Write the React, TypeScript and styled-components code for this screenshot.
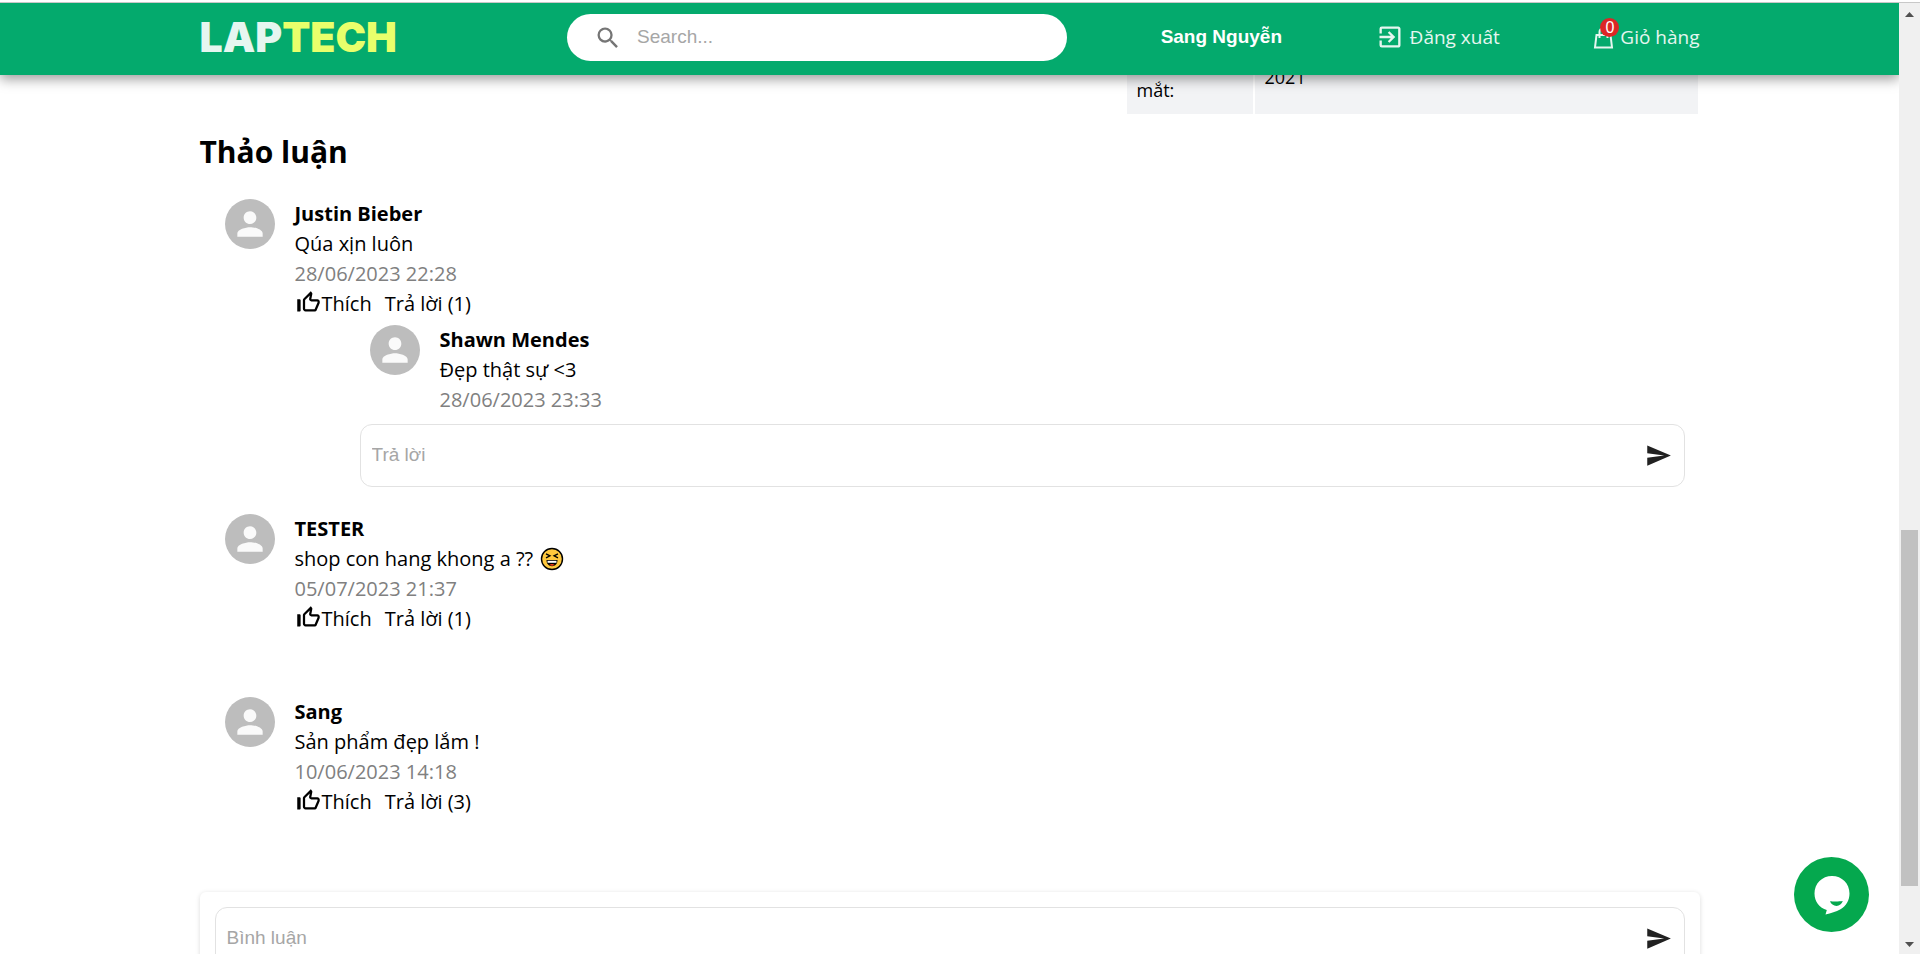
import React from 'react';
import styled, { createGlobalStyle } from 'styled-components';
import { MdExitToApp, MdPerson, MdSearch, MdSend, MdThumbUpOffAlt } from 'react-icons/md';

const GlobalStyle = createGlobalStyle`
  *, *::before, *::after { box-sizing: border-box; }
  body {
    margin: 0;
    overflow: hidden;
    background: #fff;
    color: #000;
    font-family: 'Open Sans', 'Noto Sans', sans-serif;
    font-size: 20px;
    line-height: 30px;
  }
  button { border: 0; padding: 0; background: none; color: inherit; font: inherit; cursor: pointer; }
  a { color: inherit; text-decoration: none; }
  input { font-family: 'Liberation Sans', Arial, sans-serif; }
  svg { display: block; flex: none; }
`;

const Shell = styled.div`
  height: calc(100vh - 2px);
  display: grid;
  grid-template-columns: minmax(0, 1fr) 21px;
  border-top: 1px solid #c8c8c8;
  margin-top: 2px;
  overflow: hidden;
`;

const Page = styled.div`
  min-height: 0;
  overflow: hidden;
`;

const Container = styled.div`
  width: 100%;
  max-width: 1500px;
  margin: 0 auto;
`;

const Header = styled.header`
  position: relative;
  z-index: 2;
  background: #04aa6d;
  box-shadow: 0 4px 12px rgba(0, 0, 0, 0.4);
`;

const Bar = styled(Container)`
  display: flex;
  align-items: center;
  justify-content: space-between;
  height: 72px;
  padding-bottom: 3px;
`;

const Logo = styled.a`
  flex: 0 0 274px;
  padding-bottom: 2px;
  color: #e6f6f0;
  font: 900 41px/48px Inter, sans-serif;
`;

const LogoAccent = styled.span`
  color: #e8ff6b;
`;

const SearchBox = styled.label`
  flex: 0 1 500px;
  display: flex;
  align-items: center;
  gap: 15px;
  height: 47px;
  padding: 0 27px;
  border-radius: 24px;
  background: #fff;
  color: #757575;
`;

const TextInput = styled.input`
  flex: 1;
  min-width: 0;
  padding: 0 0 2px;
  border: 0;
  outline: 0;
  background: none;
  font-size: 19px;
  &::placeholder { color: #a6a6a6; opacity: 1; }
`;

const NavLink = styled.a`
  display: flex;
  align-items: center;
  gap: 6px;
  padding-bottom: 2px;
  color: #e6f6f0;
  font-size: 19px;
`;

const UserLink = styled(NavLink)`
  color: #fff;
  font: 700 19px/30px 'Liberation Sans', Arial, sans-serif;
`;

const CartIcon = styled.span`
  position: relative;
`;

const Badge = styled.span`
  position: absolute;
  top: -7px;
  right: -5px;
  width: 19px;
  height: 19px;
  border-radius: 50%;
  background: #dc2626;
  color: #fff;
  font: 16px/19px 'Liberation Sans', Arial, sans-serif;
  text-align: center;
`;

const Specs = styled.table`
  width: 575px;
  margin: -35px 0 0 auto;
  border-spacing: 2px 0;
  font-size: 18px;
  line-height: 27px;
  th, td { padding: 10px; background: #f2f3f5; font-weight: 400; text-align: left; }
  th { width: 126px; }
`;

const Title = styled.h2`
  margin: 15px 0 25px;
  font-size: 30px;
  font-weight: 700;
  line-height: 45px;
`;

const CommentList = styled.section`
  padding: 0 15px 0 25px;
`;

const Thread = styled.article`
  min-height: 183px;
`;

const Post = styled.div`
  display: flex;
  align-items: flex-start;
  gap: 20px;
`;

const Avatar = styled.span`
  flex: none;
  display: grid;
  place-items: center;
  width: 50px;
  height: 50px;
  border-radius: 50%;
  background: #bdbdbd;
  color: #fafafa;
`;

const Author = styled.h3`
  margin: 0;
  font-size: 20px;
  font-weight: 700;
  line-height: 30px;
`;

const Text = styled.p`
  display: flex;
  align-items: center;
  gap: 7px;
  margin: 0;
`;

const Time = styled.time`
  display: block;
  color: #808080;
`;

const Actions = styled.div`
  display: flex;
  gap: 13px;
`;

const Action = styled.button`
  display: flex;
  align-items: flex-start;
`;

const Replies = styled.div`
  padding: 6px 0 27px 135px;
`;

const Reply = styled(Post)`
  padding: 0 0 9px 10px;
`;

const Field = styled.form`
  display: flex;
  align-items: center;
  height: 63px;
  padding: 0 12px 0 11px;
  border: 1px solid #e2e2e2;
  border-radius: 12px;
  background: #fff;
`;

const SendButton = styled.button`
  color: #212121;
`;

const Composer = styled.section`
  margin-top: 12px;
  padding: 15px;
  border-radius: 6px;
  box-shadow: 0 1px 5px rgba(0, 0, 0, 0.14);
`;

const ChatButton = styled.button`
  position: fixed;
  z-index: 3;
  right: 51px;
  bottom: 22px;
`;

const Scrollbar = styled.div`
  display: flex;
  flex-direction: column;
  align-items: center;
  justify-content: space-between;
  padding: 9px 0 7px;
  background: #f0f0f0;
`;

const Track = styled.div`
  flex: 1;
  display: grid;
  grid-template-rows: 513fr 356fr 56fr;
  width: 17px;
`;

const Thumb = styled.div`
  grid-row: 2;
  background: #c1c1c1;
`;

const Arrow = ({ down = false }: { down?: boolean }) => (
  <svg width="9" height="5" viewBox="0 0 9 5" fill="#505050">
    <path d={down ? 'M0 0h9L4.5 5z' : 'M0 5h9L4.5 0z'} />
  </svg>
);

const Laugh = () => (
  <svg width="24" height="24" viewBox="0 0 24 24" role="img" aria-label="laughing">
    <circle cx="12" cy="12" r="10.5" fill="#ffc83d" stroke="#000" strokeWidth="1.4" />
    <path d="M6 6.8l4 2-4 2M18 6.8l-4 2 4 2" fill="none" stroke="#000" strokeWidth="1.3" />
    <path d="M6.5 13h11c0 4-2.3 6.2-5.5 6.2S6.5 17 6.5 13z" fill="#000" />
    <path d="M7.5 13.8h9v2h-9z" fill="#fff" />
    <path d="M9.5 18c1-1.2 4-1.2 5 0-1.4.9-3.6.9-5 0z" fill="#f03a17" />
  </svg>
);

const Bag = () => (
  <svg width="21" height="24" viewBox="0 0 21 24" fill="none" stroke="currentColor" strokeWidth="2">
    <path d="M3.5 10h14l1.5 12.5H2zM6.5 13V7a4 4 0 0 1 8 0v6" />
  </svg>
);

const PersonAvatar = () => (
  <Avatar>
    <MdPerson size={38} />
  </Avatar>
);

type Message = { author: string; text: string; time: string; laugh?: boolean };
type Comment = Message & { count: number; replies?: Message[] };

const comments: Comment[] = [
  {
    author: 'Justin Bieber',
    text: 'Qúa xịn luôn',
    time: '28/06/2023 22:28',
    count: 1,
    replies: [{ author: 'Shawn Mendes', text: 'Đẹp thật sự <3', time: '28/06/2023 23:33' }],
  },
  { author: 'TESTER', text: 'shop con hang khong a ??', time: '05/07/2023 21:37', laugh: true, count: 1 },
  { author: 'Sang', text: 'Sản phẩm đẹp lắm !', time: '10/06/2023 14:18', count: 3 },
];

const MessageBody = ({ author, text, time, laugh }: Message) => (
  <>
    <Author>{author}</Author>
    <Text>
      {text}
      {laugh && <Laugh />}
    </Text>
    <Time>{time}</Time>
  </>
);

const MessageField = ({ label }: { label: string }) => (
  <Field onSubmit={(e) => e.preventDefault()}>
    <TextInput type="text" placeholder={label} aria-label={label} />
    <SendButton type="submit" aria-label="Gửi">
      <MdSend size={27} />
    </SendButton>
  </Field>
);

export default function App() {
  return (
    <>
      <GlobalStyle />
      <Shell>
        <Page>
          <Header>
            <Bar>
              <Logo href="#">
                LAP<LogoAccent>TECH</LogoAccent>
              </Logo>
              <SearchBox>
                <MdSearch size={28} />
                <TextInput type="search" placeholder="Search..." aria-label="Search" />
              </SearchBox>
              <UserLink href="#">Sang Nguyễn</UserLink>
              <NavLink href="#">
                <MdExitToApp size={28} />
                Đăng xuất
              </NavLink>
              <NavLink href="#">
                <CartIcon>
                  <Bag />
                  <Badge>0</Badge>
                </CartIcon>
                Giỏ hàng
              </NavLink>
            </Bar>
          </Header>
          <Container as="main">
            <Specs>
              <tbody>
                <tr>
                  <th scope="row">Thời điểm ra mắt:</th>
                  <td>2021</td>
                </tr>
              </tbody>
            </Specs>
            <Title>Thảo luận</Title>
            <CommentList>
              {comments.map((c) => (
                <Thread key={c.author}>
                  <Post>
                    <PersonAvatar />
                    <div>
                      <MessageBody {...c} />
                      <Actions>
                        <Action type="button">
                          <MdThumbUpOffAlt size={27} />
                          Thích
                        </Action>
                        <Action type="button">Trả lời ({c.count})</Action>
                      </Actions>
                    </div>
                  </Post>
                  {c.replies && (
                    <Replies>
                      {c.replies.map((r) => (
                        <Reply key={r.author}>
                          <PersonAvatar />
                          <div>
                            <MessageBody {...r} />
                          </div>
                        </Reply>
                      ))}
                      <MessageField label="Trả lời" />
                    </Replies>
                  )}
                </Thread>
              ))}
            </CommentList>
            <Composer>
              <MessageField label="Bình luận" />
            </Composer>
          </Container>
        </Page>
        <Scrollbar aria-hidden="true">
          <Arrow />
          <Track>
            <Thumb />
          </Track>
          <Arrow down />
        </Scrollbar>
      </Shell>
      <ChatButton type="button" aria-label="Chat">
        <svg width="75" height="75" viewBox="0 0 75 75">
          <circle cx="37.5" cy="37.5" r="37.5" fill="#05a84e" />
          <path
            d="M38 19c10 0 17.5 7.6 17.5 17.5 0 7-3.5 12.5-9 15.8-4.5 2.6-9.5 3.8-15 5.200l1.300-4.400C25.500 51 20.500 44.500 20.500 36.500 20.500 26.600 28 19 38 19z"
            fill="#fff"
          />
          <path d="M36 44.300c3 .4 9.500.4 12.800-.2-1 3-3.400 4.800-6.300 4.800-3 0-5.500-1.800-6.500-4.600z" fill="#05a84e" />
        </svg>
      </ChatButton>
    </>
  );
}
